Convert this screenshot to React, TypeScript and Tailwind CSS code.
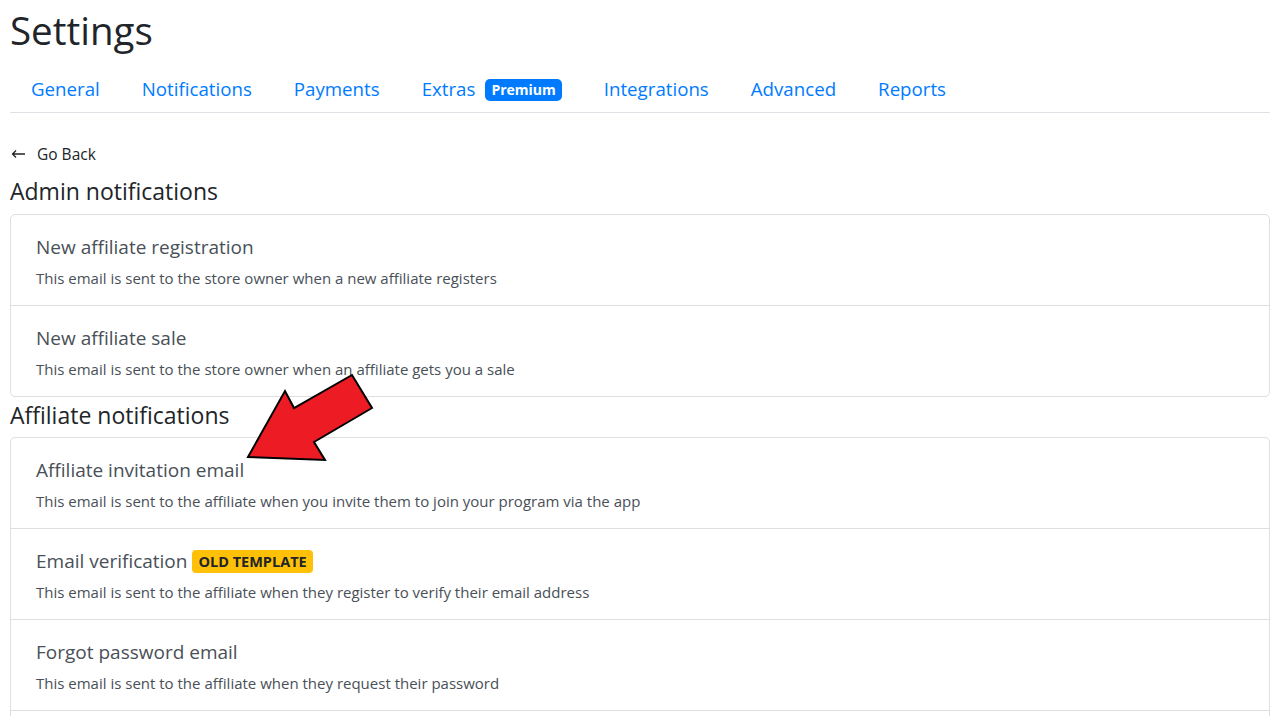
import React from 'react';

interface Notice {
    title: string;
    description: string;
    badge?: string;
}

const adminNotices: Notice[] = [
    { title: 'New affiliate registration', description: 'This email is sent to the store owner when a new affiliate registers' },
    { title: 'New affiliate sale', description: 'This email is sent to the store owner when an affiliate gets you a sale' },
];

const affiliateNotices: Notice[] = [
    { title: 'Affiliate invitation email', description: 'This email is sent to the affiliate when you invite them to join your program via the app' },
    { title: 'Email verification', description: 'This email is sent to the affiliate when they register to verify their email address', badge: 'OLD TEMPLATE' },
    { title: 'Forgot password email', description: 'This email is sent to the affiliate when they request their password' },
];

const tabs = ['General', 'Notifications', 'Payments', 'Extras', 'Integrations', 'Advanced', 'Reports'];

const NoticeList: React.FC<{ items: Notice[]; continues?: boolean }> = ({ items, continues }) => (
    <div className="border border-[#dfdfdf] rounded-[5px] bg-white">
        {items.map((item, i) => (
            <div
                key={item.title}
                className={`pl-[25px] pt-[19px] ${i > 0 ? 'h-[91px] border-t border-[#dfdfdf]' : 'h-[90px]'}`}
            >
                <div className="flex items-center gap-[5px] text-[19px] leading-[26px] text-[#495057]">
                    {item.title}
                    {item.badge && (
                        <span className="bg-[#ffc107] text-[#212529] font-bold text-[14.5px] leading-[23px] px-[6px] rounded-[4px]">
                            {item.badge}
                        </span>
                    )}
                </div>
                <p className="mt-[8px] text-[15px] leading-[20px] text-[#495057]">{item.description}</p>
            </div>
        ))}
        {/* list carries on below the fold */}
        {continues && <div className="h-[40px] border-t border-[#dfdfdf]" />}
    </div>
);

const App: React.FC = () => {
    return (
        <div className="relative h-[716px] overflow-hidden bg-white pl-[10px] pr-[7px] font-['Open_Sans',sans-serif]">
            {/* Page title */}
            <h1 className="pt-[8px] text-[38.5px] leading-[44px] text-[#212529]">Settings</h1>

            {/* Tabs */}
            <nav className="mt-[15px] flex border-b border-[#dee2e6]">
                {tabs.map((tab) => (
                    <a key={tab} href="#" className="flex items-center gap-[10px] px-[21px] h-[45px] text-[18.7px] text-[#007bff]">
                        {tab}
                        {tab === 'Extras' && (
                            <span className="bg-[#007bff] text-white font-bold text-[14px] leading-[22px] px-[6px] rounded-[5px]">
                                Premium
                            </span>
                        )}
                    </a>
                ))}
            </nav>

            {/* Go back */}
            <a href="#" className="mt-[31px] flex items-center gap-[11px] text-[15.5px] leading-[20px] text-[#212529]">
                <svg width="16" height="10" viewBox="0 0 16 10" fill="none" stroke="#212529" strokeWidth="1.3">
                    <path d="M15 5H2.5M6 1.5L2.5 5 6 8.5" />
                </svg>
                Go Back
            </a>

            <h2 className="mt-[11px] text-[23px] leading-[32px] text-[#212529]">Admin notifications</h2>
            <div className="mt-[7px]">
                <NoticeList items={adminNotices} />
            </div>

            <h2 className="mt-[2px] text-[23px] leading-[32px] text-[#212529]">Affiliate notifications</h2>
            <div className="mt-[6px]">
                <NoticeList items={affiliateNotices} continues />
            </div>

            {/* Red annotation arrow */}
            <svg className="absolute left-0 top-0 pointer-events-none" width="1277" height="716">
                <polygon
                    points="248,457 285,391 294,408 352,375 372,408 314,442 325,460"
                    fill="#ed1c24"
                    stroke="#000"
                    strokeWidth="2"
                    strokeLinejoin="miter"
                />
            </svg>
        </div>
    );
};

export default App;
